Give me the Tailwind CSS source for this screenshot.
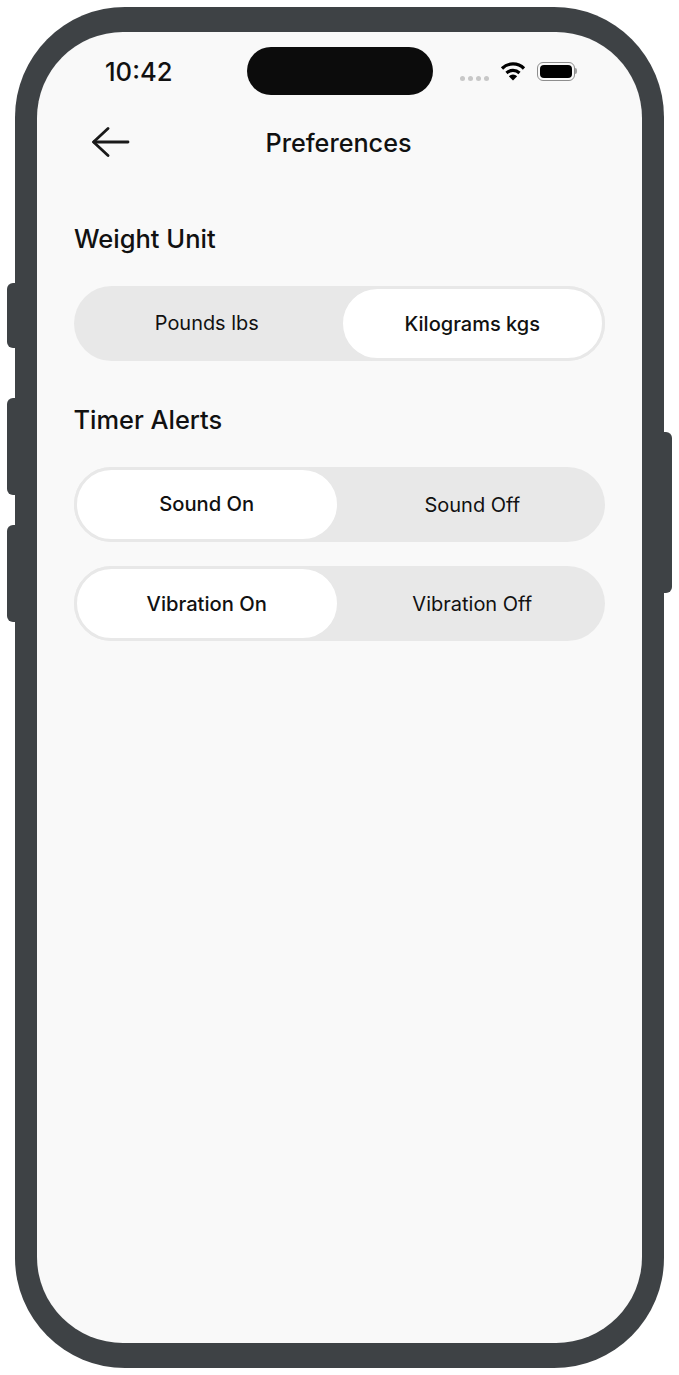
<!DOCTYPE html>
<html lang="en">
<head>
    <meta charset="UTF-8">
    <meta name="viewport" content="width=device-width, initial-scale=1.0">
    <title>Preferences</title>
    <script src="https://cdn.jsdelivr.net/npm/@tailwindcss/browser@4"></script>
</head>
<body class="bg-white font-[Inter,sans-serif] text-[#111111]">
    <div class="relative w-[679px] h-[1375px] pt-[7px] pl-[15px] overflow-hidden">
        <!-- side buttons -->
        <div class="absolute left-[7px] top-[283px] w-[10px] h-[65px] bg-[#3e4245] rounded-l-[6px]"></div>
        <div class="absolute left-[7px] top-[398px] w-[10px] h-[97px] bg-[#3e4245] rounded-l-[6px]"></div>
        <div class="absolute left-[7px] top-[525px] w-[10px] h-[97px] bg-[#3e4245] rounded-l-[6px]"></div>
        <div class="absolute left-[662px] top-[432px] w-[10px] h-[161px] bg-[#3e4245] rounded-r-[6px]"></div>

        <div class="relative w-[649px] h-[1361px] bg-[#3e4245] rounded-[110px] px-[22px] py-[25px]">
            <div class="relative w-[605px] h-[1311px] bg-[#f9f9f9] rounded-[86px] overflow-hidden">
                <!-- dynamic island -->
                <div class="absolute left-[210px] top-[15px] w-[186px] h-[48px] bg-[#0c0c0c] rounded-full"></div>

                <!-- status bar -->
                <div class="flex items-center h-[80px] pl-[68px]">
                    <span class="text-[25.6px] leading-none font-medium w-[355px]">10:42</span>
                    <div class="flex gap-[3px] mt-[12px] w-[40px]">
                        <span class="w-[5px] h-[5px] rounded-full bg-[#c8c8c8]"></span>
                        <span class="w-[5px] h-[5px] rounded-full bg-[#c8c8c8]"></span>
                        <span class="w-[5px] h-[5px] rounded-full bg-[#c8c8c8]"></span>
                        <span class="w-[5px] h-[5px] rounded-full bg-[#c8c8c8]"></span>
                    </div>
                    <svg width="26" height="20" viewBox="0 0 26 20" class="mr-[11px] -mt-[2px]">
                        <path d="M2 7.5 A15.5 15.5 0 0 1 24 7.5" fill="none" stroke="#000" stroke-width="3.2"/>
                        <path d="M6.5 12 A9.5 9.5 0 0 1 19.5 12" fill="none" stroke="#000" stroke-width="3.2"/>
                        <path d="M13 19.5 L8.8 15.2 A6 6 0 0 1 17.2 15.2 Z" fill="#000"/>
                    </svg>
                    <div class="flex items-center -mt-[2px]">
                        <div class="w-[38px] h-[19px] rounded-[6px] border border-[#8e8e8e] p-[2px]">
                            <div class="w-full h-full bg-black rounded-[4px]"></div>
                        </div>
                        <span class="w-[2px] h-[6px] bg-[#a0a0a0] rounded-r-full"></span>
                    </div>
                </div>

                <!-- header -->
                <div class="relative flex items-center justify-center h-[60px]">
                    <svg width="38" height="30" viewBox="0 0 38 30" class="absolute left-[55px] top-[15px]" fill="none" stroke="#1a1a1a" stroke-width="2.8" stroke-linecap="round" stroke-linejoin="round">
                        <path d="M36 15 H2"/>
                        <path d="M16 1.5 L1.5 15 L16 28.5"/>
                    </svg>
                    <h1 class="text-[25.2px] leading-none font-medium pt-[3px] -ml-[2px]">Preferences</h1>
                </div>

                <div class="px-[37px]">
                    <h2 class="text-[25.5px] leading-[30px] font-medium mt-[52px]">Weight Unit</h2>
                    <div class="flex h-[75px] mt-[32px] bg-[#e8e8e8] rounded-[38px]">
                        <div class="w-1/2 flex items-center justify-center text-[19.9px]">Pounds lbs</div>
                        <div class="w-1/2 flex items-center justify-center text-[20px] font-medium bg-white border-[3px] border-[#e8e8e8] rounded-[38px]">Kilograms kgs</div>
                    </div>

                    <h2 class="text-[25.4px] leading-[30px] font-medium mt-[44px] -ml-[0.5px]">Timer Alerts</h2>
                    <div class="flex h-[75px] mt-[32px] bg-[#e8e8e8] rounded-[38px]">
                        <div class="w-1/2 flex items-center justify-center text-[20.2px] font-medium bg-white border-[3px] border-[#e8e8e8] rounded-[38px]">Sound On</div>
                        <div class="w-1/2 flex items-center justify-center text-[20px]">Sound Off</div>
                    </div>
                    <div class="flex h-[75px] mt-[24px] bg-[#e8e8e8] rounded-[38px]">
                        <div class="w-1/2 flex items-center justify-center text-[20.2px] font-medium bg-white border-[3px] border-[#e8e8e8] rounded-[38px] pt-[1px]">Vibration On</div>
                        <div class="w-1/2 flex items-center justify-center text-[20px]">Vibration Off</div>
                    </div>
                </div>
            </div>
        </div>
    </div>
</body>
</html>
